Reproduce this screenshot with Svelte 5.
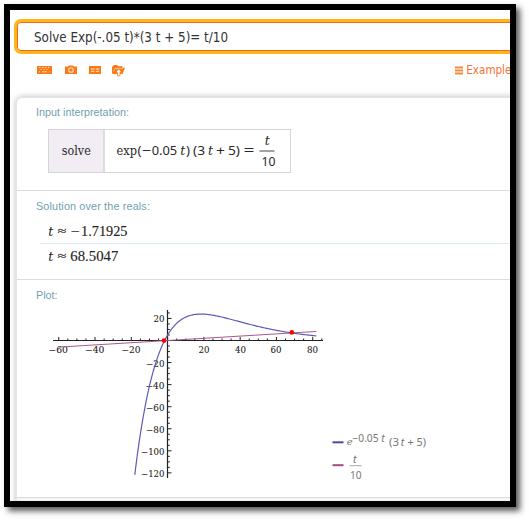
<script>
  const X0 = 167.6, Y0 = 340.5, SX = 1.814, SY = 1.103;
  const px = (t) => X0 + t * SX;
  const py = (v) => Y0 - v * SY;
  const f = (t) => Math.exp(-0.05 * t) * (3 * t + 5);
  const curve = Array.from({ length: 202 }, (_, i) => -18.1 + i * 0.498)
    .map((t) => `${px(t).toFixed(2)},${py(f(t)).toFixed(2)}`)
    .join(' ');
  const xt = Array.from({ length: 30 }, (_, i) => -60 + i * 5);
  const yt = Array.from({ length: 30 }, (_, i) => -120 + i * 5);
  const xl = [
    [-60, 48.5, 19.5], [-40, 85, 19.5], [-20, 121.5, 19],
    [20, 198.5, 11], [40, 235, 11], [60, 270.5, 11], [80, 307, 11]
  ];
  const yl = [
    [20, 153.5, 11], [-20, 146, 18.5], [-40, 145.5, 19], [-60, 146, 18.5],
    [-80, 146, 18.5], [-100, 141, 23.5], [-120, 141, 23.5]
  ];
  const fmt = (n) => String(n).replace('-', '−');
</script>

<div class="page">
  <div class="frame">
    <div class="search"><svg width="460" height="26" viewBox="30 24 460 26"><text x="34" y="42" textLength="194" lengthAdjust="spacingAndGlyphs">Solve Exp(-.05 t)*(3 t + 5)= t/10</text></svg></div>
    <div class="tools">
      <svg class="icons" width="90" height="14" viewBox="36 63 90 14">
        <path d="M37 66h15v8H37z" fill="#f97a1b" />
        <path d="M39 67.5h1.5m1.5 0h1.5m1.5 0h1.5m1.5 0h1.5M40.5 69.5h1m2 0h1m2 0h1M39 71.8h1m2 0h5m2 0h1" stroke="#ffe0bd" stroke-width=".9" />
        <path d="M65 66.5h3l1-1h4l1 1h3v7.5H65z" fill="#f97a1b" />
        <circle cx="71" cy="70" r="2.3" fill="#f97a1b" stroke="#ffdcb8" stroke-width="1.1" />
        <path d="M89 66h12v8H89z" fill="#f97a1b" />
        <path d="M91 69h3.5m1.3 0h3.5M91 71.3h3.5m1.3 0h3.5" stroke="#ffe3c9" stroke-width="1" />
        <path d="M112 73v-6l2-2h3l1.5 1.2h4v1.6h2.6l-2.6 6.2h-9q-1.5 0-1.5-1z" fill="#f97a1b" />
        <path d="M113.5 71.5l1.5-3h8" fill="none" stroke="#ffc78f" stroke-width=".8" />
        <path d="M118.7 69l3.2 3.4h-1.9v3.4h-2.6v-3.4h-1.9z" fill="#fff" stroke="#f97a1b" stroke-width=".8" />
      </svg>
      <svg width="55" height="16" viewBox="455 62 55 16">
        <path d="M455 67.5h8M455 70.5h8M455 73.5h8" stroke="#f68a3c" stroke-width="1.8" />
        <text x="466.3" y="74" class="ex" textLength="50.5" lengthAdjust="spacingAndGlyphs">Examples</text>
      </svg>
    </div>
    <div class="card">
      <section class="input">
        <h2>Input interpretation:</h2>
        <div class="formula">
          <div class="verb"><svg width="54" height="42" viewBox="49.5 129.5 54 42"><text x="62.3" y="154.8" class="word" textLength="29" lengthAdjust="spacingAndGlyphs">solve</text></svg></div>
          <svg width="185" height="42" viewBox="105.5 129.5 185 42">
            <g class="num">
              <text x="117" y="154.8" class="word" textLength="20.5" lengthAdjust="spacingAndGlyphs">exp</text>
              <text x="138" y="154.8">(</text>
              <text x="142.3" y="154.8" textLength="9.5" lengthAdjust="spacingAndGlyphs">−</text>
              <text x="152.2" y="154.8" textLength="25.5" lengthAdjust="spacingAndGlyphs">0.05</text>
              <text x="180.8" y="154.8" class="it">t</text>
              <text x="186.5" y="154.8">)</text>
              <text x="193.5" y="154.8" textLength="12" lengthAdjust="spacingAndGlyphs">(3</text>
              <text x="208.5" y="154.8" class="it">t</text>
              <text x="216.5" y="154.8" textLength="9" lengthAdjust="spacingAndGlyphs">+</text>
              <text x="228.5" y="154.8" textLength="12" lengthAdjust="spacingAndGlyphs">5)</text>
              <text x="244" y="154.8" textLength="11" lengthAdjust="spacingAndGlyphs">=</text>
              <text x="265.3" y="144.8" class="it">t</text>
              <text x="262" y="165.7" textLength="14" lengthAdjust="spacingAndGlyphs">10</text>
            </g>
            <path d="M260 150.5h15" stroke="#444" />
          </svg>
        </div>
      </section>
      <section class="solution">
        <h2 class="wide">Solution over the reals:</h2>
        <div class="answer first"><svg width="150" height="25" viewBox="40 218 150 25"><g class="res"><text x="48.3" y="235.6" class="it">t</text><text x="57.5" y="235" class="approx" textLength="9" lengthAdjust="spacingAndGlyphs">≈</text><text x="70.5" y="235.6" textLength="9" lengthAdjust="spacingAndGlyphs">−</text><text x="81" y="235.6" textLength="46.5" lengthAdjust="spacingAndGlyphs">1.71925</text></g></svg></div>
        <div class="answer"><svg width="150" height="25" viewBox="40 244 150 25"><g class="res"><text x="48.3" y="261" class="it">t</text><text x="57.5" y="260.3" class="approx" textLength="9" lengthAdjust="spacingAndGlyphs">≈</text><text x="70.3" y="261" textLength="48" lengthAdjust="spacingAndGlyphs">68.5047</text></g></svg></div>
      </section>
      <section class="plot">
        <h2>Plot:</h2>
        <svg width="460" height="186" viewBox="36 304 460 186">
          <g class="tick">
            {#each xl as [n, x, w]}<text {x} y="353" textLength={w} lengthAdjust="spacingAndGlyphs">{fmt(n)}</text>{/each}
            {#each yl as [n, x, w]}<text {x} y={py(n) + 4} textLength={w} lengthAdjust="spacingAndGlyphs">{fmt(n)}</text>{/each}
          </g>
          <g fill="none" stroke="#222" stroke-width="1">
            <path d="M53 340.5H323M167.5 310V478" stroke-width="1.2" />
            {#each xt as t}<path d="M{px(t)} 340.5v{t % 20 ? -2 : -3.5}" />{/each}
            {#each yt as v}<path d="M167.5 {py(v)}h{v % 20 ? 2.3 : 4}" />{/each}
          </g>
          <path d="M{px(-60)} {py(-6)}L{px(82)} {py(8.2)}" stroke="#a9588c" stroke-width="1" />
          <polyline points={curve} fill="none" stroke="#5f5cb4" stroke-width="1.2" />
          <circle cx="164" cy="340.6" r="2.4" fill="#f00" />
          <circle cx="291.8" cy="332.4" r="2.4" fill="#f00" />
          <path d="M332.5 442.3h11" stroke="#4b49a5" stroke-width="2" />
          <path d="M332.5 465.2h11" stroke="#a04b82" stroke-width="2" />
          <g class="legend">
            <text x="346.8" y="445.3" class="e">e</text>
            <text x="352.5" y="441.5" textLength="26" lengthAdjust="spacingAndGlyphs">−0.05</text>
            <text x="381.3" y="441.5" class="it">t</text>
            <text x="389" y="445.5" textLength="10" lengthAdjust="spacingAndGlyphs">(3</text>
            <text x="400.8" y="445.5" class="it">t</text>
            <text x="407.5" y="445.5" textLength="18.5" lengthAdjust="spacingAndGlyphs">+ 5)</text>
            <text x="353" y="462.8" class="it">t</text>
            <text x="350" y="479.3" textLength="11.5" lengthAdjust="spacingAndGlyphs">10</text>
          </g>
          <path d="M349.5 465.7h12" stroke="#aaa" />
        </svg>
      </section>
      <div class="rest"></div>
    </div>
  </div>
</div>

<style>
  :global(body) { background: #fff; }
  .page { box-sizing: border-box; width: 529px; height: 520px; padding: 4px; overflow: hidden; }
  .frame { box-sizing: border-box; width: 512px; height: 503px; border: 6px solid #000; background: #fff; overflow: hidden; box-shadow: 4px 4px 6px rgba(0, 0, 0, .65); display: flex; flex-direction: column; }
  svg { display: block; flex: none; }
  .search { box-sizing: border-box; flex: none; width: 520px; height: 35px; margin: 9px 0 0 4px; border: 3px solid #ffb619; border-radius: 7px; box-shadow: inset 0 0 0 1px #f4671f; padding: 2px 0 0 13px; background: #fff; }
  .search text { font: 13.5px "DejaVu Sans Condensed", "DejaVu Sans", sans-serif; font-stretch: condensed; fill: #333; }
  .tools { display: flex; justify-content: space-between; align-items: flex-start; flex: none; height: 43px; padding: 8px 0 0 26px; box-sizing: border-box; }
  .icons { margin-top: 1px; }
  .ex { font: 12px "DejaVu Sans Condensed", "DejaVu Sans", sans-serif; font-stretch: condensed; fill: #f47336; }
  .card { flex: none; margin-left: 6px; width: 510px; height: 410px; border: 1px solid #e4e4e4; border-radius: 6px 0 0 0; background: #fff; box-shadow: 0 0 6px #bbb; box-sizing: border-box; }
  section { box-sizing: border-box; border-bottom: 1px solid #dcdcdc; padding-left: 19px; display: flex; flex-direction: column; align-items: flex-start; }
  h2 { margin: 0; font: 10.8px/14px "Liberation Sans", sans-serif; color: #719fae; flex: none; }
  .wide { letter-spacing: .15px; }
  .input { height: 93px; padding-top: 7px; }
  .formula { display: flex; border: 1px solid #d5d5d5; margin: 10px 0 0 12px; }
  .verb { background: #f2ecf4; border-right: 2px solid #ddd; }
  .num { font: 13.2px "Noto Sans", sans-serif; fill: #2a2a2a; }
  .word { font: 12.8px "DejaVu Serif", serif; fill: #2a2a2a; }
  .res { font: 14.5px "Liberation Serif", serif; fill: #222; stroke: #222; stroke-width: .12; }
  .approx { font-size: 12px; }
  .it { font-style: italic; }
  .num .it, .res .it { font: italic 12.5px "DejaVu Serif", serif; stroke: none; }
  .solution { height: 89px; padding-top: 8px; }
  .answer { margin-left: 4px; width: 490px; height: 25px; }
  .first { margin-top: 5px; border-bottom: 1px solid #dcecee; }
  .plot { height: 218px; padding-top: 8px; }
  .plot svg { margin-top: 2px; }
  .rest { height: 8px; background: #f3f6f6; }
  .tick { font: 9.2px "DejaVu Serif", serif; fill: #222; stroke: #222; stroke-width: .1; }
  .legend { font: 10.5px "Noto Sans", sans-serif; fill: #777; }
  .e { font: italic 10px "DejaVu Serif", serif; }
</style>
